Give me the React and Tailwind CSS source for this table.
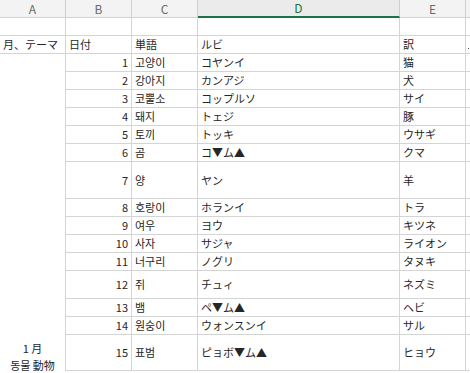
const rows = [
  { n: 1, ko: "고양이", ruby: "コヤンイ", jp: "猫", h: "h-[18px]" },
  { n: 2, ko: "강아지", ruby: "カンアジ", jp: "犬", h: "h-[18px]" },
  { n: 3, ko: "코뿔소", ruby: "コップルソ", jp: "サイ", h: "h-[18px]" },
  { n: 4, ko: "돼지", ruby: "トェジ", jp: "豚", h: "h-[18px]" },
  { n: 5, ko: "토끼", ruby: "トッキ", jp: "ウサギ", h: "h-[18px]" },
  { n: 6, ko: "곰", ruby: "コ▼ム▲", jp: "クマ", h: "h-[18px]" },
  { n: 7, ko: "양", ruby: "ヤン", jp: "羊", h: "h-[37px]" },
  { n: 8, ko: "호랑이", ruby: "ホランイ", jp: "トラ", h: "h-[18px]" },
  { n: 9, ko: "여우", ruby: "ヨウ", jp: "キツネ", h: "h-[18px]" },
  { n: 10, ko: "사자", ruby: "サジャ", jp: "ライオン", h: "h-[18px]" },
  { n: 11, ko: "너구리", ruby: "ノグリ", jp: "タヌキ", h: "h-[18px]" },
  { n: 12, ko: "쥐", ruby: "チュィ", jp: "ネズミ", h: "h-[28px]" },
  { n: 13, ko: "뱀", ruby: "ペ▼ム▲", jp: "ヘビ", h: "h-[18px]" },
  { n: 14, ko: "원숭이", ruby: "ウォンスンイ", jp: "サル", h: "h-[18px]" },
  { n: 15, ko: "표범", ruby: "ピョボ▼ム▲", jp: "ヒョウ", h: "h-[36px]" },
];

const cell = "flex items-center border-r border-b border-[#d4d4d4] overflow-hidden whitespace-nowrap";

export default function App() {
  return (
    <div
      className="w-[470px] h-[373px] overflow-hidden bg-white text-[11px] text-[#262626]"
      style={{ fontFamily: '"Noto Sans CJK JP", "Noto Sans CJK KR", sans-serif' }}
    >
      {/* column letters */}
      <div className="flex h-[18px] bg-[#f3f3f3] text-[12px] text-[#6b6b6b]">
        <div className="w-[66px] flex items-center justify-center border-r border-b border-[#d0d0d0]">A</div>
        <div className="w-[66px] flex items-center justify-center border-r border-b border-[#d0d0d0]">B</div>
        <div className="w-[66px] flex items-center justify-center border-r border-b border-[#d0d0d0]">C</div>
        <div className="w-[202px] flex items-center justify-center border-r border-[#d0d0d0] border-b-2 border-b-[#1e7145] bg-[#ebebeb] text-[#1e7145]">D</div>
        <div className="w-[66px] flex items-center justify-center border-r border-b border-[#d0d0d0]">E</div>
        <div className="flex-1 border-b border-[#d0d0d0]"></div>
      </div>

      {/* empty row */}
      <div className="flex h-[18px]">
        <div className={`${cell} w-[66px]`}></div>
        <div className={`${cell} w-[66px]`}></div>
        <div className={`${cell} w-[66px]`}></div>
        <div className={`${cell} w-[202px]`}></div>
        <div className={`${cell} w-[66px]`}></div>
        <div className="flex-1 border-b border-[#d4d4d4]"></div>
      </div>

      {/* header row */}
      <div className="flex h-[18px]">
        <div className={`${cell} w-[66px] pl-[3px]`}>月、テーマ</div>
        <div className={`${cell} w-[66px] pl-[3px]`}>日付</div>
        <div className={`${cell} w-[66px] pl-[3px]`}>単語</div>
        <div className={`${cell} w-[202px] pl-[3px]`}>ルビ</div>
        <div className={`${cell} w-[66px] pl-[3px]`}>訳</div>
        <div className="flex-1 flex items-end pb-[4px] pl-[2px] border-b border-[#d4d4d4]">
          <span className="w-[1px] h-[1px] bg-[#555]"></span>
        </div>
      </div>

      {/* data */}
      <div className="flex">
        <div className="w-[66px] flex flex-col items-center justify-end border-r border-[#d4d4d4] leading-[17px]">
          <div className="flex flex-col items-center translate-y-[3px]">
            <span>1 月</span>
            <span>동물 動物</span>
          </div>
        </div>
        <div className="flex flex-col">
          {rows.map((r) => (
            <div key={r.n} className={`flex ${r.h}`}>
              <div className={`${cell} w-[66px] justify-end pr-[3px]`}>{r.n}</div>
              <div className={`${cell} w-[66px] pl-[3px]`}>{r.ko}</div>
              <div className={`${cell} w-[202px] pl-[3px]`}>{r.ruby}</div>
              <div className={`${cell} w-[66px] pl-[3px]`}>{r.jp}</div>
              <div className="w-[4px] border-b border-[#d4d4d4]"></div>
            </div>
          ))}
        </div>
      </div>
    </div>
  );
}
